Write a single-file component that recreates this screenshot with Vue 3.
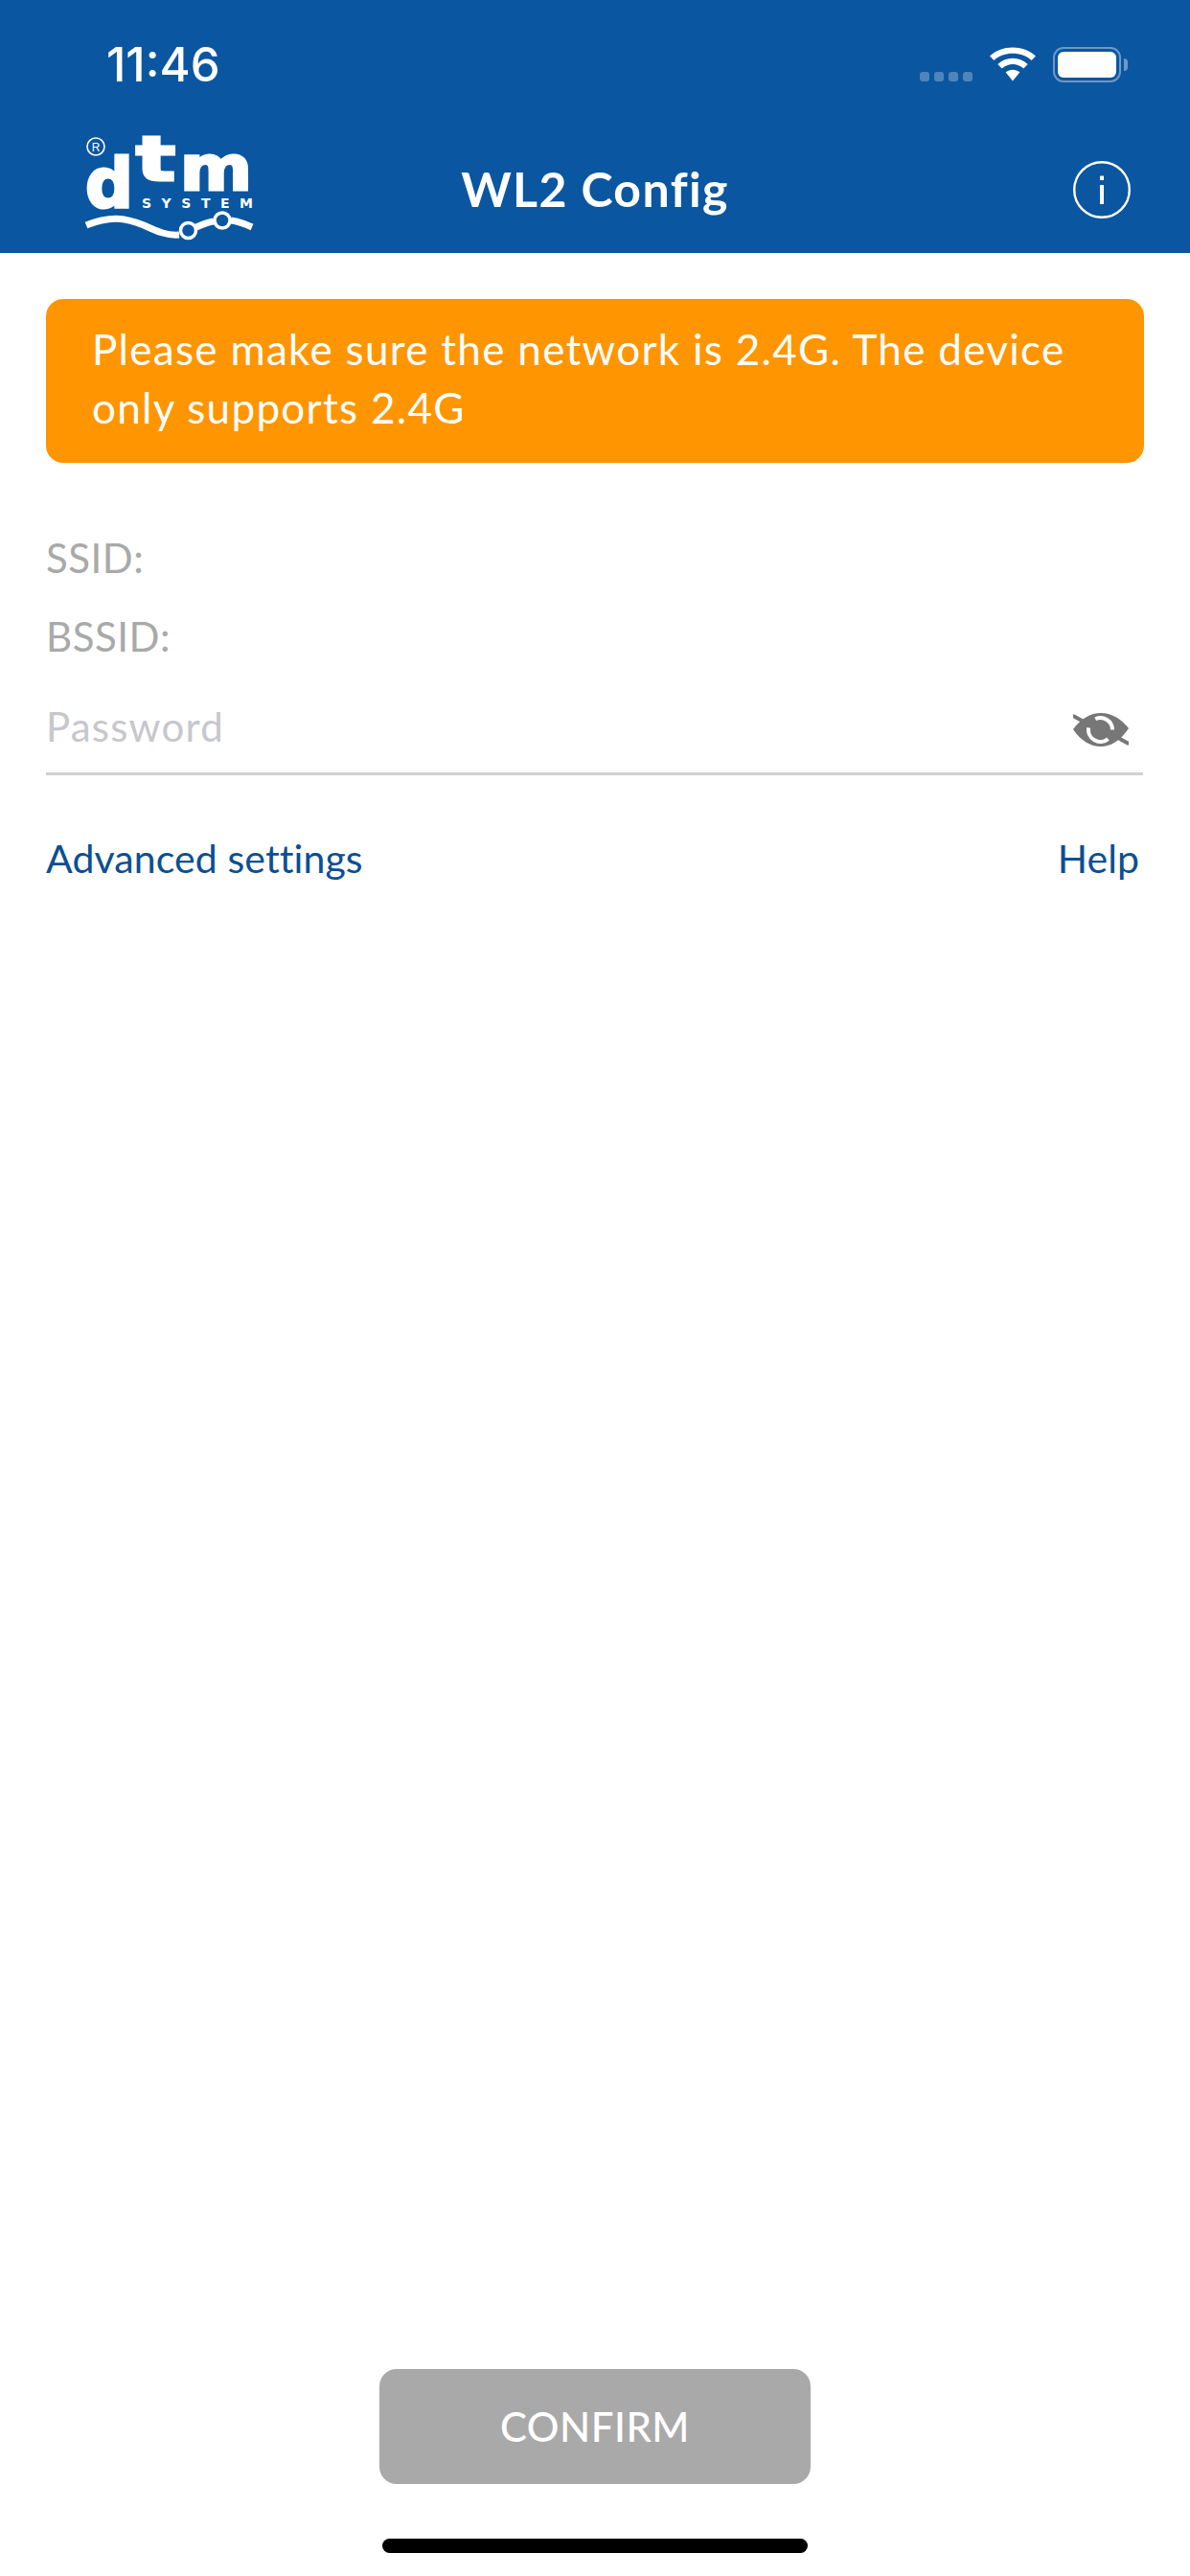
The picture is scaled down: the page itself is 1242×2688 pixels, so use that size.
<script setup>
const dots = [0, 1, 2, 3];
</script>

<template>
  <div class="screen">
    <header class="header">
      <div class="status">
        <span class="time">11:46</span>
        <div class="status-icons">
          <div class="dots">
            <i v-for="d in dots" :key="d" class="dot"></i>
          </div>
          <svg class="wifi" width="50" height="36" viewBox="0 0 50 36">
            <path d="M1 9.500C14-2.600 36-2.600 49 9.500l-4.400 4.600C34 4.400 16 4.400 5.400 14.100Z" fill="#fff" />
            <path d="M9.300 18C18.500 9.600 31.500 9.600 40.700 18l-4.400 4.600C29.600 16.600 20.400 16.600 13.700 22.600Z" fill="#fff" />
            <path d="M17.700 26.500c4.400-3.600 10.200-3.600 14.600 0L25 35.500Z" fill="#fff" />
          </svg>
          <div class="battery">
            <div class="battery-body"><div class="battery-fill"></div></div>
            <div class="battery-nub"></div>
          </div>
        </div>
      </div>
      <div class="nav">
        <svg class="logo" width="176" height="112" viewBox="88 142 176 112">
          <circle cx="100" cy="154" r="9" fill="none" stroke="#fff" stroke-width="1.600" />
          <text x="100" y="158.500" class="logo-reg">R</text>
          <text x="89" y="217" class="logo-d" textLength="50" lengthAdjust="spacingAndGlyphs">d</text>
          <text x="142" y="189" class="logo-t" textLength="41" lengthAdjust="spacingAndGlyphs">t</text>
          <text x="188" y="199" class="logo-m" textLength="75" lengthAdjust="spacingAndGlyphs">m</text>
          <text x="148" y="218" class="logo-sys" textLength="116">SYSTEM</text>
          <path d="M90 236C115 226 130 228 150 236C165 243 175 247 187 246M205 238C212 235 216 233 223 232M241 231C250 232 256 235 263 238" fill="none" stroke="#fff" stroke-width="7" />
          <circle cx="196.500" cy="241.500" r="8" fill="none" stroke="#fff" stroke-width="3.500" />
          <circle cx="232" cy="231" r="8" fill="none" stroke="#fff" stroke-width="3.500" />
        </svg>
        <div class="title">WL2 Config</div>
        <svg class="info" width="60" height="60" viewBox="0 0 60 60">
          <circle cx="30" cy="30" r="28.800" fill="none" stroke="#fff" stroke-width="2.400" />
          <rect x="28" y="15.500" width="4" height="4.500" fill="#fff" />
          <rect x="28" y="25" width="4" height="20" fill="#fff" />
        </svg>
      </div>
    </header>

    <main class="content">
      <div class="notice">Please make sure the network is 2.4G. The device only supports 2.4G</div>
      <div class="field-label first">SSID:</div>
      <div class="field-label">BSSID:</div>
      <div class="password">
        <span class="placeholder">Password</span>
        <svg class="eye" width="58" height="35" viewBox="0 0 58 35">
          <path d="M0 17C8 6 18 0 29 0s21 6 29 16c-8 12-18 19-29 19S8 29 0 17Z" fill="#777" />
          <path d="M1 3.500L11 9M47 26l10 5.500" stroke="#777" stroke-width="4" stroke-linecap="round" />
          <path d="M23.200 6.200A12.500 12.500 0 0 1 41 17.500" fill="none" stroke="#fff" stroke-width="4" />
          <path d="M36.500 27.100A12.500 12.500 0 0 1 16.200 15.300" fill="none" stroke="#fff" stroke-width="4" />
        </svg>
      </div>
      <div class="links">
        <span>Advanced settings</span>
        <span>Help</span>
      </div>
    </main>

    <footer class="footer">
      <button class="confirm">CONFIRM</button>
      <div class="home-bar"></div>
    </footer>
  </div>
</template>

<style scoped>
.screen {
  width: 1242px;
  height: 2688px;
  display: flex;
  flex-direction: column;
  background: #fff;
  font-family: Lato, "Open Sans", sans-serif;
  overflow: hidden;
}
.header {
  height: 264px;
  background: #0b56a0;
  color: #fff;
}
.status {
  height: 132px;
  box-sizing: border-box;
  padding: 0 65px 0 111px;
  display: flex;
  justify-content: space-between;
  align-items: flex-start;
}
.time {
  margin-top: 40px;
  font-family: Inter, sans-serif;
  font-size: 49px;
  line-height: 56px;
  font-weight: 500;
}
.status-icons {
  margin-top: 49px;
  display: flex;
  align-items: flex-start;
}
.dots {
  display: flex;
  gap: 5px;
  margin-top: 26px;
  margin-right: 17px;
}
.dot {
  width: 10px;
  height: 10px;
  border-radius: 3px;
  background: rgba(255, 255, 255, 0.28);
}
.wifi {
  margin-right: 17px;
}
.battery {
  display: flex;
  align-items: center;
  height: 37px;
}
.battery-body {
  width: 71px;
  height: 37px;
  box-sizing: border-box;
  border: 2.500px solid rgba(255, 255, 255, 0.4);
  border-radius: 11px;
  padding: 3px;
}
.battery-fill {
  height: 100%;
  background: #fff;
  border-radius: 6px;
}
.battery-nub {
  width: 4px;
  height: 13px;
  margin-left: 3px;
  background: rgba(255, 255, 255, 0.4);
  border-radius: 0 4px 4px 0;
}
.nav {
  height: 132px;
  display: grid;
  grid-template-columns: 1fr auto 1fr;
  align-items: center;
}
.logo {
  margin-left: 88px;
  margin-top: -2px;
  overflow: visible;
}
.logo text {
  fill: #fff;
}
.logo-reg {
  font-family: "Liberation Sans", sans-serif;
  font-size: 12px;
  text-anchor: middle;
}
.logo-d,
.logo-t,
.logo-m {
  font-family: "DejaVu Sans", sans-serif;
  font-weight: 700;
  stroke: #fff;
  stroke-width: 3px;
}
.logo-d {
  font-size: 72px;
}
.logo-t {
  font-size: 64px;
}
.logo-m {
  font-size: 64px;
}
.logo-sys {
  font-family: "DejaVu Sans", sans-serif;
  font-weight: 700;
  font-size: 14px;
}
.title {
  font-size: 50px;
  font-weight: 700;
  line-height: 60px;
  letter-spacing: 1.400px;
  margin-top: -2px;
}
.info {
  justify-self: end;
  margin-right: 62px;
}
.content {
  flex: 1;
  padding: 48px 48px 0;
}
.notice {
  background: #ff9500;
  color: #fff;
  border-radius: 18px;
  padding: 22px 40px 27px 48px;
  font-size: 44px;
  line-height: 61px;
  letter-spacing: 1.300px;
}
.field-label {
  color: #a9a9a9;
  font-size: 42px;
  line-height: 52px;
  letter-spacing: 0.500px;
  margin-top: 30px;
}
.field-label.first {
  margin-top: 73px;
}
.password {
  display: flex;
  justify-content: space-between;
  align-items: center;
  height: 96px;
  margin-top: 20px;
  margin-right: 1px;
  border-bottom: 3px solid #d0d0d0;
}
.placeholder {
  color: #c7c7cd;
  font-size: 42px;
  letter-spacing: 1.200px;
}
.eye {
  margin-top: 6px;
  margin-right: 15px;
}
.links {
  display: flex;
  justify-content: space-between;
  margin-top: 61px;
  padding-right: 5px;
  color: #0b4f94;
  font-size: 41px;
  line-height: 52px;
  letter-spacing: 0.100px;
}
.footer {
  height: 216px;
  display: flex;
  flex-direction: column;
  align-items: center;
}
.confirm {
  width: 450px;
  height: 120px;
  border: 0;
  border-radius: 18px;
  background: #a9a9a9;
  color: #fff;
  font-family: Lato, sans-serif;
  font-size: 42px;
  font-weight: 500;
  letter-spacing: 0.500px;
}
.home-bar {
  width: 444px;
  height: 15px;
  margin-top: 57px;
  border-radius: 8px;
  background: #000;
}
</style>
